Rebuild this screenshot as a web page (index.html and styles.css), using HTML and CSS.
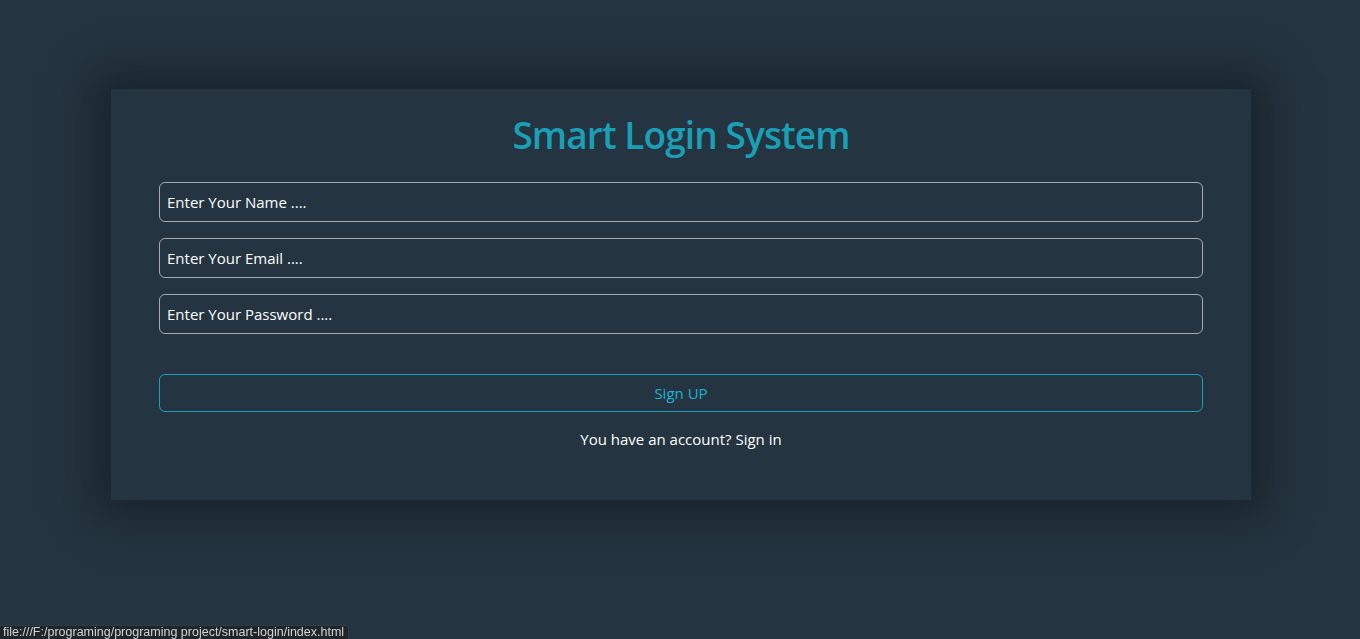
FILE: index.html
```html
<!DOCTYPE html>
<html lang="en">
<head>
<meta charset="utf-8">
<title>Smart Login System</title>
<link rel="stylesheet" href="styles.css">
</head>
<body>
<main class="container">
  <section class="card">
    <h1 class="title">Smart Login System</h1>
    <form class="form">
      <input class="field" type="text" placeholder="Enter Your Name ....">
      <input class="field" type="email" placeholder="Enter Your Email ....">
      <input class="field" type="password" placeholder="Enter Your Password ....">
      <button class="btn" type="button">Sign UP</button>
    </form>
    <p class="note">You have an account? <a class="link" href="#">Sign in</a></p>
  </section>
</main>
<div class="status">file:///F:/programing/programing project/smart-login/index.html</div>
</body>
</html>
```

FILE: styles.css
```css
html, body {
  margin: 0;
  padding: 0;
  height: 100%;
}
body {
  background: #243440;
  font-family: "Open Sans", "Noto Sans", sans-serif;
  color: #fff;
  overflow: hidden;
}
.container {
  width: 1140px;
  margin: 89px 0 0 calc(50% - 569px);
}
.card {
  background: #243440;
  padding: 21px 48px 50px;
  box-shadow: 0 0 40px 14px rgba(15, 20, 24, 0.55);
}
.title {
  margin: 0 0 22px;
  text-align: center;
  font-family: "Open Sans", sans-serif;
  font-weight: 600;
  font-size: 37px;
  letter-spacing: -0.9px;
  line-height: 50px;
  color: #1a9fb6;
}
.form {
  display: flex;
  flex-direction: column;
}
.field {
  box-sizing: border-box;
  height: 40px;
  margin-bottom: 16px;
  padding: 0 7px;
  background: #243440;
  border: 1px solid #a4acb1;
  border-radius: 6px;
  color: #fff;
  font-family: "Open Sans", sans-serif;
  font-size: 15px;
  outline: none;
}
.field::placeholder {
  color: #fff;
  opacity: 1;
}
.btn {
  box-sizing: border-box;
  height: 38px;
  margin-top: 24px;
  background: transparent;
  border: 1px solid #1a9fc0;
  border-radius: 6px;
  color: #1cb4d6;
  font-family: "Open Sans", sans-serif;
  font-size: 15px;
  cursor: pointer;
}
.note {
  margin: 16px 0 0;
  text-align: center;
  font-size: 15px;
  line-height: 22px;
}
.link {
  color: #fff;
  text-decoration: none;
}
.status {
  position: fixed;
  left: 0;
  bottom: 0;
  padding: 0 4px 0 3px;
  background: #202529;
  border: 1px solid #333a40;
  border-left: none;
  border-bottom: none;
  border-top-right-radius: 3px;
  color: #cfd4d8;
  font-family: "Liberation Sans", sans-serif;
  font-size: 12.5px;
  line-height: 13px;
  height: 13px;
  white-space: nowrap;
}
```
